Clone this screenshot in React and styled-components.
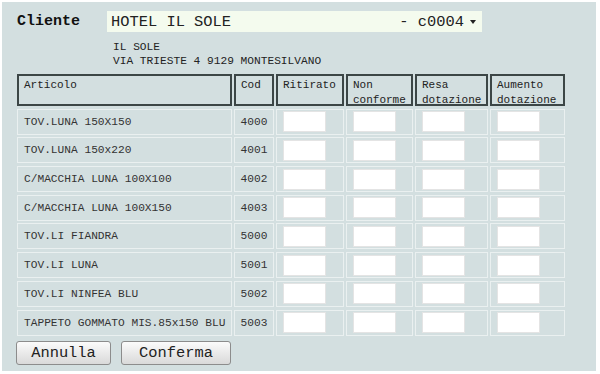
import React from 'react'
import styled, { createGlobalStyle } from 'styled-components'

const GlobalStyle = createGlobalStyle`
    html, body {
        margin: 0;
        padding: 0;
        background: #ffffff;
    }
    body {
        font-family: "Liberation Mono", "Courier New", monospace;
    }
`;

const Panel = styled.div`
    margin: 2px 0 0 2px;
    width: 594px;
    height: 369px;
    background: #d3dfe0;
    box-sizing: border-box;
    padding: 9px 0 0 15px;
`;

const ClientRow = styled.div`
    display: flex;
    align-items: center;
    height: 21px;
`;

const ClientLabel = styled.span`
    width: 90px;
    font-size: 15px;
    font-weight: bold;
    color: #111;
`;

const Select = styled.div`
    width: 375px;
    height: 21px;
    background: #f4fbee;
    display: flex;
    align-items: center;
    box-sizing: border-box;
    padding: 0 6px 0 4px;
    font-size: 15.4px;
    color: #222;
`;

const SelectName = styled.span`
    flex: 1;
`;

const Caret = styled.span`
    width: 0;
    height: 0;
    margin-left: 6px;
    border-left: 3px solid transparent;
    border-right: 3px solid transparent;
    border-top: 4px solid #222;
`;

const Address = styled.div`
    margin: 8px 0 0 96px;
    font-size: 11.2px;
    line-height: 14px;
    color: #222;
`;

const Grid = styled.div`
    margin-top: 6px;
    display: grid;
    grid-template-columns: 215px 40px 68px 67px 73px 75px;
    grid-template-rows: 32px;
    grid-auto-rows: 26px;
    column-gap: 2px;
    row-gap: 2.7px;
`;

const HeadCell = styled.div`
    border: 2px solid #3c4646;
    box-sizing: border-box;
    padding: 2px 5px 0;
    font-size: 11px;
    line-height: 14.5px;
    color: #222;
`;

const Cell = styled.div`
    border: 1px solid #eaf0f0;
    box-sizing: border-box;
    display: flex;
    align-items: center;
    justify-content: ${p => (p.$center ? 'center' : 'flex-start')};
    padding: ${p => (p.$input ? '0 0 0 6px' : '0 6px')};
    font-size: 11.2px;
    color: #333;
    white-space: nowrap;
`;

const Field = styled.input`
    width: 43px;
    height: 21px;
    box-sizing: border-box;
    border: 1px solid #e4e4e4;
    background: #fff;
    padding: 0;
    margin: 0;
`;

const Buttons = styled.div`
    display: flex;
    gap: 10px;
    margin: 5px 0 0 -1px;
`;

const Button = styled.button`
    width: ${p => p.$w}px;
    height: 24px;
    border: 1px solid #8c8c8c;
    border-radius: 3px;
    background: linear-gradient(#fbfbfb, #d9d9d9);
    font-family: "Liberation Mono", "Courier New", monospace;
    font-size: 15.4px;
    color: #222;
    padding: 0;
`;

const headers = ['Articolo', 'Cod', 'Ritirato', 'Non conforme', 'Resa dotazione', 'Aumento dotazione'];

const items = [
    ['TOV.LUNA 150X150', '4000'],
    ['TOV.LUNA 150x220', '4001'],
    ['C/MACCHIA LUNA 100X100', '4002'],
    ['C/MACCHIA LUNA 100X150', '4003'],
    ['TOV.LI FIANDRA', '5000'],
    ['TOV.LI LUNA', '5001'],
    ['TOV.LI NINFEA BLU', '5002'],
    ['TAPPETO GOMMATO MIS.85x150 BLU', '5003'],
];

const App = () => {
    return (
        <Panel>
            <GlobalStyle />
            <ClientRow>
                <ClientLabel>Cliente</ClientLabel>
                <Select>
                    <SelectName>HOTEL IL SOLE</SelectName>
                    <span>- c0004</span>
                    <Caret />
                </Select>
            </ClientRow>
            <Address>
                <div>IL SOLE</div>
                <div>VIA TRIESTE 4 9129 MONTESILVANO</div>
            </Address>
            <Grid>
                {headers.map(h => <HeadCell key={h}>{h}</HeadCell>)}
                {items.map(([name, cod]) => (
                    <React.Fragment key={cod}>
                        <Cell>{name}</Cell>
                        <Cell $center>{cod}</Cell>
                        <Cell $input><Field /></Cell>
                        <Cell $input><Field /></Cell>
                        <Cell $input><Field /></Cell>
                        <Cell $input><Field /></Cell>
                    </React.Fragment>
                ))}
            </Grid>
            <Buttons>
                <Button $w={95}>Annulla</Button>
                <Button $w={110}>Conferma</Button>
            </Buttons>
        </Panel>
    )
}

export default App
